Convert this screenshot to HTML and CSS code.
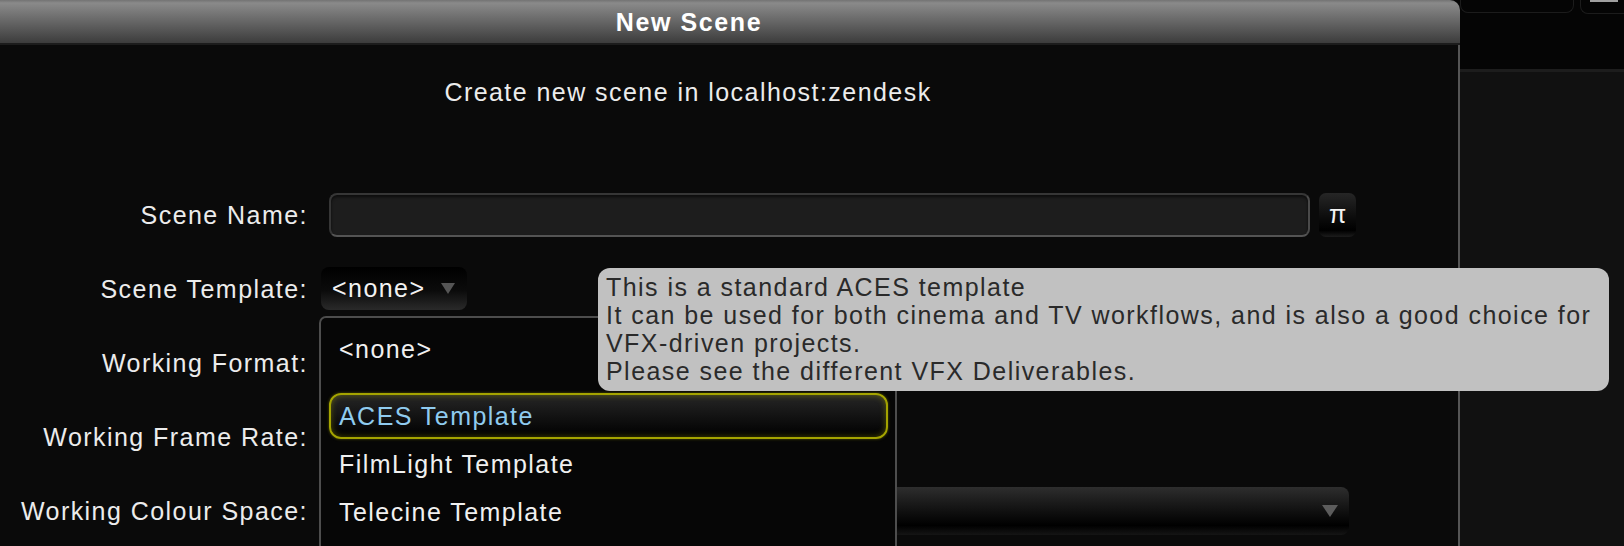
FILE: index.html
```html
<!DOCTYPE html>
<html lang="en">
<head>
    <meta charset="UTF-8">
    <meta name="viewport" content="width=device-width, initial-scale=1.0">
    <title>New Scene</title>
    <link rel="stylesheet" href="styles.css">
</head>
<body>
    <div class="screen">
        <div class="dialog">
            <div class="titlebar">New Scene</div>
            <div class="dialog-body">
                <p class="subtitle">Create new scene in localhost:zendesk</p>

                <div class="form">
                    <label class="label">Scene Name:</label>
                    <div class="field name-field">
                        <div class="text-input"></div>
                        <button class="pi-btn">π</button>
                    </div>

                    <label class="label">Scene Template:</label>
                    <div class="field">
                        <div class="combo combo-open"><span>&lt;none&gt;</span><span class="arrow"></span></div>
                    </div>

                    <label class="label">Working Format:</label>
                    <div class="field"></div>

                    <label class="label">Working Frame Rate:</label>
                    <div class="field"></div>

                    <label class="label">Working Colour Space:</label>
                    <div class="field">
                        <div class="combo combo-wide"><span></span><span class="arrow"></span></div>
                    </div>
                </div>
            </div>
        </div>

        <div class="side">
            <div class="side-top">
                <div class="side-tab"></div>
                <div class="side-tab side-tab-last"><span class="side-mark"></span></div>
            </div>
            <div class="side-rest"></div>
        </div>

        <!-- open template menu -->
        <div class="popup-list">
            <div class="item item-none">&lt;none&gt;</div>
            <div class="item selected">ACES Template</div>
            <div class="item">FilmLight Template</div>
            <div class="item">Telecine Template</div>
        </div>

        <div class="tooltip">
            This is a standard ACES template<br>
            It can be used for both cinema and TV workflows, and is also a good choice for<br>
            VFX-driven projects.<br>
            Please see the different VFX Deliverables.
        </div>
    </div>
</body>
</html>
```

FILE: styles.css
```css
html, body {
    margin: 0;
    padding: 0;
    background-color: #050505;
    overflow: hidden;
}
body {
    font-family: "Liberation Sans", Arial, sans-serif;
    font-size: 25px;
    letter-spacing: 1.45px;
    color: #ececec;
}
.screen {
    position: relative;
    display: flex;
    height: 546px;
    overflow: hidden;
}

/* dialog */
.dialog {
    flex: none;
    width: 1542px;
    margin-left: -82px;
    display: flex;
    flex-direction: column;
}
.titlebar {
    height: 43px;
    line-height: 44px;
    border-bottom: 2px solid #1c1c1c;
    border-top-right-radius: 10px;
    background: linear-gradient(to bottom, #737373 0, #8a8a8a 3px, #3c3c3c 100%);
    text-align: center;
    font-weight: bold;
    letter-spacing: 1.6px;
    color: #fff;
}
.dialog-body {
    flex: 1;
    background-color: #0a0a0a;
    border-right: 2px solid #555;
}
.subtitle {
    margin: 0;
    padding-top: 33px;
    line-height: 28px;
    text-align: center;
}
.form {
    margin-top: 72px;
    display: grid;
    grid-template-columns: 390px 1fr;
    grid-auto-rows: 74px;
    column-gap: 13px;
    align-items: center;
}
.label {
    text-align: right;
    line-height: 28px;
}
.field {
    display: flex;
    align-items: center;
}
.name-field {
    gap: 9px;
    padding-left: 8px;
    margin-top: -1px;
}
.text-input {
    box-sizing: border-box;
    width: 981px;
    height: 44px;
    background-color: #1d1d1d;
    border: 2px solid #363636;
    border-bottom-color: #545454;
    border-right-color: #4a4a4a;
    border-radius: 8px;
    box-shadow: inset 0 2px 3px rgba(0, 0, 0, 0.6);
}
.pi-btn {
    width: 37px;
    height: 44px;
    padding: 0;
    border: none;
    border-radius: 7px;
    background: linear-gradient(to bottom, #262626 0%, #0a0a0a 60%, #000 85%, #1c1c1c 100%);
    color: #f4f4f4;
    font-family: "Liberation Sans", Arial, sans-serif;
    font-size: 25px;
    letter-spacing: 0;
}

/* combos */
.combo {
    box-sizing: border-box;
    display: flex;
    align-items: center;
    justify-content: space-between;
    border-radius: 8px;
}
.combo-open {
    width: 146px;
    height: 43px;
    margin-top: -1px;
    padding: 0 12px 0 11px;
    background: linear-gradient(to bottom, #000 0%, #0b0b0b 55%, #2a2a2a 100%);
    color: #f2f2f2;
}
.combo-wide {
    width: 1028px;
    height: 48px;
    margin-top: -1px;
    padding: 0 11px 0 11px;
    background: linear-gradient(to bottom, #2e2e2e 0%, #191919 35%, #000 80%, #151515 100%);
}
.arrow {
    width: 0;
    height: 0;
    border-left: 8px solid transparent;
    border-right: 8px solid transparent;
    border-top: 12px solid #5c5c5c;
}
.combo-open .arrow {
    border-left-width: 7px;
    border-right-width: 7px;
    border-top-width: 11px;
    border-top-color: #555;
}

/* right side panel */
.side {
    flex: 1;
    display: flex;
    flex-direction: column;
}
.side-top {
    height: 69px;
    background-color: #050505;
    border-bottom: 3px solid #1d1d1d;
    display: flex;
    gap: 6px;
    align-items: flex-start;
}
.side-tab {
    width: 112px;
    height: 12px;
    border: 1px solid #1c1c1c;
    border-top: none;
    border-radius: 0 0 8px 8px;
}
.side-tab-last {
    flex: 1;
    height: 13px;
    border-right: none;
    border-radius: 0 0 0 8px;
}
.side-mark {
    display: block;
    width: 28px;
    height: 2px;
    margin-left: 9px;
    background-color: #a0a0a0;
}
.side-rest {
    flex: 1;
    background-color: #111;
}

/* popup menu */
.popup-list {
    position: absolute;
    left: 319px;
    top: 316px;
    bottom: -10px;
    box-sizing: border-box;
    width: 578px;
    padding: 7px 7px 0 8px;
    background-color: #060606;
    border: 2px solid #4d4d4d;
    border-bottom: none;
    border-radius: 7px 7px 0 0;
}
.item {
    box-sizing: border-box;
    height: 46px;
    line-height: 42px;
    padding-left: 8px;
    border: 2px solid transparent;
    border-radius: 12px;
    color: #f0f0f0;
    margin-top: 2px;
}
.item-none {
    margin-top: 1px;
    margin-bottom: 21px;
}
.item.selected {
    border-color: #a4a400;
    background: linear-gradient(to bottom, #262626 0%, #111 55%, #000 100%);
    box-shadow: inset 0 0 6px rgba(170, 170, 0, 0.45), 0 0 3px rgba(140, 140, 0, 0.6);
    color: #8fcbef;
}

/* tooltip */
.tooltip {
    position: absolute;
    left: 598px;
    top: 268px;
    box-sizing: border-box;
    width: 1011px;
    height: 123px;
    padding: 5px 8px;
    background-color: #c1c1c1;
    border-radius: 12px;
    color: #2a2a2a;
    line-height: 28px;
    white-space: nowrap;
}
```
